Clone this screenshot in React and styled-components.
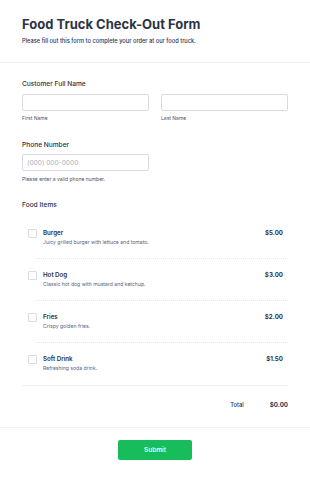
import React from "react";
import styled, { createGlobalStyle } from "styled-components";

const items = [
  { name: "Burger", desc: "Juicy grilled burger with lettuce and tomato.", price: "$5.00" },
  { name: "Hot Dog", desc: "Classic hot dog with mustard and ketchup.", price: "$3.00" },
  { name: "Fries", desc: "Crispy golden fries.", price: "$2.00" },
  { name: "Soft Drink", desc: "Refreshing soda drink.", price: "$1.50" },
];

function App() {
  return (
    <>
      <GlobalStyle />
      <Page>
        <Header>
          <Title>Food Truck Check-Out Form</Title>
          <Subtitle>Please fill out this form to complete your order at our food truck.</Subtitle>
        </Header>
        <Body>
          <Field>
            <Label>Customer Full Name</Label>
            <NameRow>
              <div>
                <Input />
                <SubLabel>First Name</SubLabel>
              </div>
              <div>
                <Input />
                <SubLabel>Last Name</SubLabel>
              </div>
            </NameRow>
          </Field>
          <Field>
            <Label>Phone Number</Label>
            <Input placeholder="(000) 000-0000" />
            <SubLabel>Please enter a valid phone number.</SubLabel>
          </Field>
          <Field last>
            <Label>Food Items</Label>
            <ItemList>
              {items.map((item, i) => (
                <React.Fragment key={item.name}>
                  {i > 0 && <Separator />}
                  <Item last={i === items.length - 1}>
                    <Check />
                    <ItemText>
                      <ItemName>{item.name}</ItemName>
                      <ItemDesc>{item.desc}</ItemDesc>
                    </ItemText>
                    <Price>{item.price}</Price>
                  </Item>
                </React.Fragment>
              ))}
            </ItemList>
            <TotalRow>
              <TotalLabel>Total</TotalLabel>
              <TotalValue>$0.00</TotalValue>
            </TotalRow>
          </Field>
        </Body>
        <Footer>
          <SubmitButton>Submit</SubmitButton>
        </Footer>
      </Page>
    </>
  );
}

const GlobalStyle = createGlobalStyle`
  body {
    margin: 0;
    background: #fff;
    font-family: Inter, "Noto Sans", sans-serif;
    color: #2c3345;
  }
`;

const Page = styled.div`
  width: 310px;
  background: #fff;
`;

const Header = styled.div`
  padding: 16px 22px 0;
  height: 46px;
  border-bottom: 1px solid #eceef2;
`;

const Title = styled.h1`
  margin: 0;
  font-size: 13px;
  font-weight: 700;
  line-height: 16px;
  color: #2c3345;
`;

const Subtitle = styled.p`
  margin: 5px 0 0;
  font-size: 5.7px;
  font-weight: 500;
  line-height: 8px;
  color: #283454;
`;

const Body = styled.div`
  padding: 17px 22px 18px;
  border-bottom: 1px solid #f1f2f5;
`;

const Field = styled.div`
  margin-bottom: ${(p) => (p.last ? 0 : 18.5)}px;
`;

const Label = styled.div`
  font-size: 6.6px;
  font-weight: 500;
  line-height: 9px;
  color: #2c3345;
  margin-bottom: 4.5px;
`;

const NameRow = styled.div`
  display: grid;
  grid-template-columns: 128px 128px;
  column-gap: 11px;
`;

const Input = styled.input`
  display: block;
  box-sizing: border-box;
  width: 127px;
  height: 17px;
  margin: 0;
  padding: 0 4px;
  border: 1px solid #d8dbe3;
  border-radius: 2px;
  font-family: Inter, sans-serif;
  font-size: 6.6px;
  color: #2c3345;
  &::placeholder {
    color: #a9b0bd;
  }
`;

const SubLabel = styled.div`
  font-size: 5px;
  line-height: 7px;
  color: #4c5366;
  margin-top: 4.5px;
`;

const ItemList = styled.div`
  margin: 7px 0 0 6px;
`;

const Separator = styled.div`
  margin-left: 7px;
  border-top: 1px dotted #e3e5ea;
`;

const Item = styled.div`
  display: flex;
  align-items: flex-start;
  padding: 12px 0 ${(p) => (p.last ? 13.5 : 12.5)}px;
`;

const Check = styled.div`
  width: 7px;
  height: 7px;
  border: 1px solid #d9dce3;
  border-radius: 1px;
  margin-right: 6px;
  flex-shrink: 0;
`;

const ItemText = styled.div`
  flex: 1;
`;

const ItemName = styled.div`
  font-size: 6.2px;
  font-weight: 600;
  line-height: 8px;
  color: #2c3345;
`;

const ItemDesc = styled.div`
  font-size: 5.1px;
  line-height: 7px;
  margin-top: 1.5px;
  color: #57647e;
`;

const Price = styled.div`
  font-size: 6.2px;
  font-weight: 700;
  line-height: 8px;
  color: #2c3345;
  padding-right: 5px;
`;

const TotalRow = styled.div`
  display: flex;
  justify-content: flex-end;
  align-items: center;
  gap: 26px;
  border-top: 1px solid #eceef2;
  padding-top: 15px;
  line-height: 8px;
`;

const TotalLabel = styled.div`
  font-size: 5.8px;
  font-weight: 500;
  color: #2c3345;
`;

const TotalValue = styled.div`
  font-size: 6.2px;
  font-weight: 700;
  color: #2c3345;
`;

const Footer = styled.div`
  display: flex;
  justify-content: center;
  padding-top: 12px;
`;

const SubmitButton = styled.button`
  width: 74px;
  height: 20px;
  background: #18bd5b;
  color: #fff;
  border: none;
  border-radius: 2px;
  font-family: Inter, sans-serif;
  font-size: 6.5px;
  font-weight: 500;
`;

export default App;
